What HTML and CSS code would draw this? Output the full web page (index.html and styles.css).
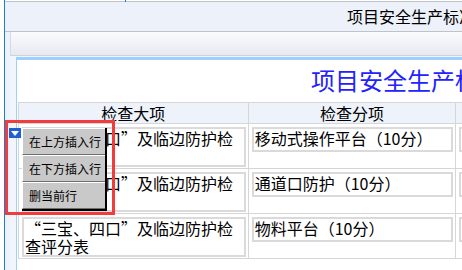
FILE: index.html
```html
<!DOCTYPE html>
<html>
<head>
    <title>项目安全生产标准化考核评分</title>
    <link rel="stylesheet" href="styles.css">
</head>
<body>
    <div class="app">
        <!-- top strip -->
        <div class="topline"><span class="tick"></span></div>
        <div class="titlebar">项目安全生产标准化考核评分</div>

        <div class="main">
            <div class="side"></div>
            <div class="work">
                <div class="toolbar"></div>
                <div class="framewrap">
                    <div class="frame">
                        <div class="sheet-title">项目安全生产标准化考核评分表</div>
                        <table class="grid">
                            <tr class="head">
                                <th class="c1">检查大项</th>
                                <th class="c2">检查分项</th>
                                <th class="c3">评分标准</th>
                            </tr>
                            <tr>
                                <td><div class="box tall">“三宝、四口”及临边防护检查评分表</div></td>
                                <td><div class="box">移动式操作平台（10分）</div></td>
                                <td><div class="box"></div></td>
                            </tr>
                            <tr>
                                <td><div class="box tall">“三宝、四口”及临边防护检查评分表</div></td>
                                <td><div class="box">通道口防护（10分）</div></td>
                                <td><div class="box"></div></td>
                            </tr>
                            <tr>
                                <td><div class="box tall">“三宝、四口”及临边防护检查评分表</div></td>
                                <td><div class="box">物料平台（10分）</div></td>
                                <td><div class="box"></div></td>
                            </tr>
                        </table>
                    </div>
                </div>
            </div>
        </div>

        <!-- row context menu, highlighted -->
        <div class="highlight"></div>
        <svg class="row-icon" width="12" height="10" viewBox="0 0 12 10">
            <rect x="0" y="0" width="12" height="10" fill="#1f5fd0"/>
            <path d="M2 3 L10 3 L6 8 Z" fill="#ffffff"/>
        </svg>
        <div class="menu">
            <div class="item">在上方插入行</div>
            <div class="item">在下方插入行</div>
            <div class="item">删当前行</div>
        </div>
    </div>
</body>
</html>
```

FILE: styles.css
```css
/* page frame */
body {
    margin: 0;
    padding-left: 4px;
    background: #ffffff;
    font-family: "Noto Sans CJK SC", "Liberation Sans", sans-serif;
    color: #000;
    overflow: hidden;
}
.app {
    position: relative;
    height: 270px;
    border-left: 1px solid #1a7fd4;
    overflow: hidden;
}
/* top strip and title bar */
.topline {
    height: 1px;
    border-bottom: 1px solid #c0c4c9;
    position: relative;
}
.tick {
    position: absolute;
    left: 120px;
    top: 0;
    width: 1px;
    height: 2px;
    background: #1a7fd4;
}
.titlebar {
    height: 29px;
    line-height: 29px;
    background: #edf1f9;
    border-bottom: 1px solid #bfc3c8;
    padding-left: 342px;
    font-size: 16px;
    white-space: nowrap;
}
/* main area */
.main {
    display: flex;
}
.side {
    width: 5px;
    background: #eef2fa;
    height: 240px;
}
.work {
    flex: 1;
    min-width: 0;
}
.toolbar {
    height: 23px;
    border-left: 1px solid #d6d9e1;
    border-bottom: 1px solid #cfd2d8;
    background: linear-gradient(#fbfbfd, #e7e9f3);
}
.framewrap {
    padding: 1px 0 0 6px;
    background: #f2f5fb;
    height: 220px;
}
.frame {
    background: #ffffff;
    border-top: 3px solid #9fcfff;
    border-left: 1px solid #9fcfff;
    height: 220px;
    padding-left: 1px;
}
.sheet-title {
    height: 42px;
    padding-left: 293px;
    font-size: 24px;
    line-height: 40px;
    color: #2222ff;
    white-space: nowrap;
}
/* table */
.grid {
    border-collapse: collapse;
    table-layout: fixed;
    width: 640px;
    font-size: 16px;
}
.grid th, .grid td {
    border: 1px solid #d6d6d6;
}
.grid th {
    height: 20px;
    padding: 0;
    background: #edf2fb;
    font-weight: normal;
    line-height: 20px;
}
.grid td {
    padding: 3px 2px 1px 3px;
    vertical-align: top;
}
.c1 { width: 228px; }
.c2 { width: 206px; }
.c3 { width: 200px; }
.box {
    box-sizing: border-box;
    height: 25px;
    border: 2px solid #dadada;
    line-height: 18px;
    padding: 0 0 0 1px;
    overflow: hidden;
}
.box.tall {
    height: 40px;
}
/* context menu */
.highlight {
    position: absolute;
    left: 0;
    top: 120px;
    width: 104px;
    height: 89px;
    border: 3px solid #f23b3b;
}
.row-icon {
    position: absolute;
    left: 4px;
    top: 128px;
}
.menu {
    position: absolute;
    left: 17px;
    top: 128px;
    width: 83px;
    border-right: 2px solid #000;
    border-bottom: 2px solid #000;
    font-size: 12px;
}
.item {
    height: 25px;
    line-height: 25px;
    padding-left: 6px;
    background: #c9c9c9;
    border-top: 1px solid #ffffff;
    border-left: 1px solid #ffffff;
    border-bottom: 1px solid #6f6f6f;
}
```
